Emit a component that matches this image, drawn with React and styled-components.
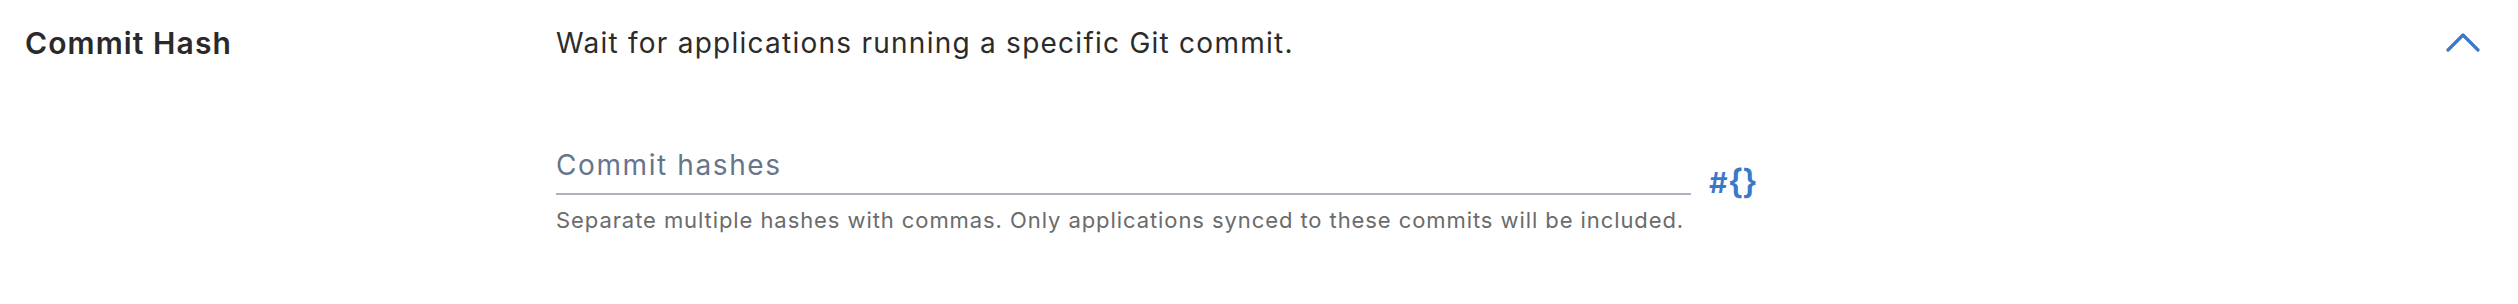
import React from "react";
import styled, { createGlobalStyle } from "styled-components";

const Global = createGlobalStyle`
  html, body { margin: 0; padding: 0; background: #ffffff; }
  body { font-family: Inter, "Noto Sans", sans-serif; -webkit-font-smoothing: antialiased; }
  * { box-sizing: border-box; }
`;

const Section = styled.section`
  display: grid;
  grid-template-columns: 531px 1fr 80px;
  padding: 0 37px 0 25px;
  height: 304px;
  background: #fff;
`;

const Label = styled.h3`
  margin: 0;
  padding-top: 26px;
  font-size: 30px;
  font-weight: 600;
  letter-spacing: 1.1px;
  color: #2a2a2a;
  line-height: 34px;
`;

const Body = styled.div`
  display: flex;
  flex-direction: column;
  padding-top: 26px;
`;

const Description = styled.p`
  margin: 0;
  font-size: 28px;
  letter-spacing: 1.25px;
  line-height: 34px;
  color: #2b2b2b;
`;

const FieldRow = styled.div`
  display: flex;
  align-items: flex-end;
  gap: 18px;
  margin-top: 77px;
`;

const Input = styled.input`
  width: 1135px;
  height: 58px;
  border: none;
  border-bottom: 2px solid #abb1bc;
  padding: 0;
  font-family: inherit;
  font-size: 28px;
  letter-spacing: 1.6px;
  color: #2b2b2b;
  background: transparent;
  outline: none;
  &::placeholder { color: #66758c; }
`;

const VarButton = styled.button`
  display: flex;
  align-items: center;
  border: none;
  background: none;
  padding: 0;
  margin-bottom: -4px;
  color: #3a78c8;
  cursor: pointer;
  font-family: Inter, sans-serif;
`;

const Hash = styled.span`
  font-size: 29px;
  font-weight: 600;
  line-height: 1;
`;

const Braces = styled.span`
  font-size: 34px;
  font-weight: 600;
  line-height: 1;
  letter-spacing: -1px;
`;

const Helper = styled.p`
  margin: 10px 0 0;
  font-size: 22px;
  letter-spacing: 0.92px;
  line-height: 30px;
  color: #6b6b6b;
`;

const Toggle = styled.button`
  justify-self: end;
  align-self: start;
  margin-top: 28px;
  border: none;
  background: none;
  padding: 0;
  width: 36px;
  height: 28px;
  display: flex;
  align-items: center;
  justify-content: center;
  cursor: pointer;
`;

export default function App() {
  return (
    <>
      <Global />
      <Section>
        <Label>Commit Hash</Label>
        <Body>
          <Description>Wait for applications running a specific Git commit.</Description>
          <FieldRow>
            <Input placeholder="Commit hashes" />
            <VarButton aria-label="Insert variable">
              <Hash>#</Hash>
              <Braces>{"{}"}</Braces>
            </VarButton>
          </FieldRow>
          <Helper>
            Separate multiple hashes with commas. Only applications synced to these commits will be included.
          </Helper>
        </Body>
        <Toggle aria-label="Collapse">
          <svg width="34" height="20" viewBox="0 0 34 20" fill="none">
            <path d="M2 18 L17 3 L32 18" stroke="#3a78c8" strokeWidth="3.2" strokeLinecap="round" strokeLinejoin="round" />
          </svg>
        </Toggle>
      </Section>
    </>
  );
}
